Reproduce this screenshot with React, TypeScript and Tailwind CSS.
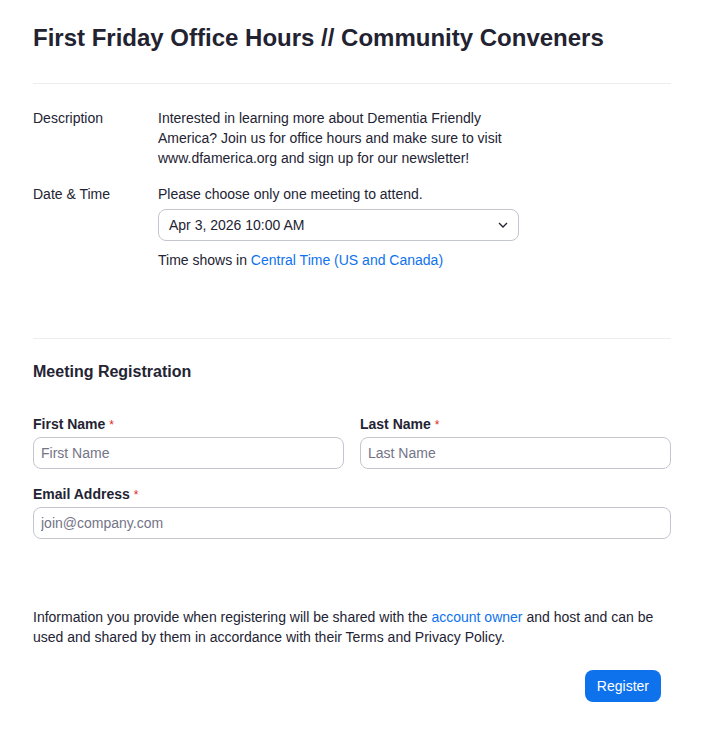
import React from "react";

// Zoom-style meeting registration page
function Field({ label, placeholder }: { label: string; placeholder: string }) {
  return (
    <div className="flex-1">
      <div className="text-[14px] font-bold leading-[20px] text-[#232333]">
        {label} <span className="text-[#e02828] font-normal text-[12px]">*</span>
      </div>
      <input
        className="mt-[2px] block w-full h-[32px] rounded-[8px] border border-[#c4c6cf] px-[7px] text-[14px] text-[#232333] placeholder:text-[#747487] outline-none"
        placeholder={placeholder}
      />
    </div>
  );
}

export default function App() {
  return (
    <div
      className="min-h-[732px] bg-white text-[#232333]"
      style={{ fontFamily: '"Liberation Sans", Arial, sans-serif' }}
    >
      <div className="pl-[33px] pr-[35px]">
        <h1 className="pt-[24px] text-[24px] font-bold leading-[28px] text-[#222230]">
          First Friday Office Hours // Community Conveners
        </h1>
        <div className="mt-[31px] border-t border-[#ededf0]" />

        <div className="pt-[24px] text-[14px] leading-[20px]">
          <div className="flex">
            <div className="w-[125px] shrink-0">Description</div>
            <div className="w-[360px]">
              Interested in learning more about Dementia Friendly America? Join us for office hours and make sure to visit
              www.dfamerica.org and sign up for our newsletter!
            </div>
          </div>
          <div className="mt-[16px] flex">
            <div className="w-[125px] shrink-0">Date &amp; Time</div>
            <div>
              <div>Please choose only one meeting to attend.</div>
              <div className="mt-[5px] flex h-[32px] w-[361px] items-center justify-between rounded-[8px] border border-[#c4c6cf] pl-[10px] pr-[10px]">
                <span>Apr 3, 2026 10:00 AM</span>
                <svg width="10" height="6" viewBox="0 0 10 6" fill="none">
                  <path d="M1 1l4 4 4-4" stroke="#232333" strokeWidth="1.3" />
                </svg>
              </div>
              <div className="mt-[9px]">
                Time shows in <span className="text-[#0e72ed]">Central Time (US and Canada)</span>
              </div>
            </div>
          </div>
        </div>

        <div className="mt-[68px] border-t border-[#ededf0]" />

        <h2 className="mt-[22px] text-[16px] font-bold leading-[22px]">Meeting Registration</h2>

        <div className="mt-[31px] flex gap-[16px]">
          <Field label="First Name" placeholder="First Name" />
          <Field label="Last Name" placeholder="Last Name" />
        </div>
        <div className="mt-[15px]">
          <Field label="Email Address" placeholder="join@company.com" />
        </div>

        <p className="mt-[68px] text-[14px] leading-[20px]">
          Information you provide when registering will be shared with the{" "}
          <span className="text-[#0e72ed]">account owner</span> and host and can be used and shared by them in
          accordance with their Terms and Privacy Policy.
        </p>

        <div className="mt-[23px] flex justify-end pr-[10px]">
          <button className="h-[32px] rounded-[8px] bg-[#0e72ed] px-[12px] text-[14px] text-white">Register</button>
        </div>
      </div>
    </div>
  );
}
